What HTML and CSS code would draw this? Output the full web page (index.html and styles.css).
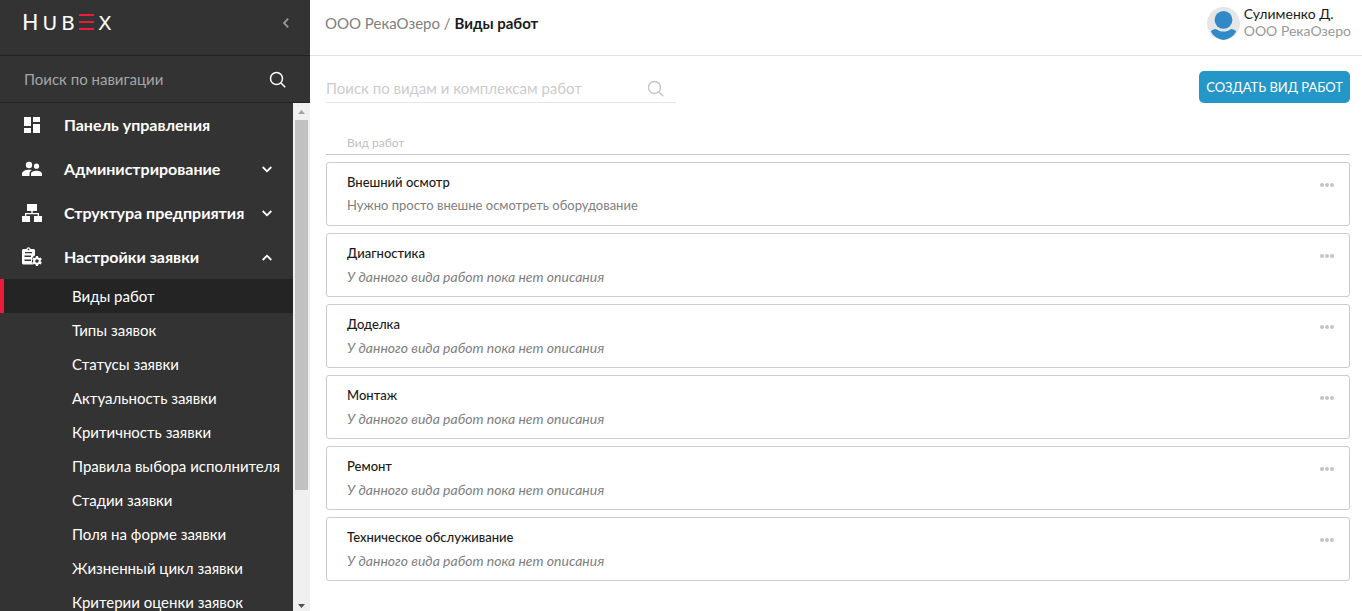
FILE: index.html
```html
<!DOCTYPE html>
<html lang="ru">
<head>
<meta charset="utf-8">
<meta name="viewport" content="width=device-width, initial-scale=1">
<title>Виды работ</title>
<link rel="stylesheet" href="styles.css">
</head>
<body>
<div class="app">
  <aside class="sidebar">
    <div class="sidebar-top">
      <a class="logo" href="#" aria-label="HubEx">
        <span class="logo-cap">H</span><span>U</span><span>B</span>
        <svg class="logo-bars" width="15" height="16" viewBox="0 0 15 16" aria-hidden="true"><path d="M0 0h15v2H0zM0 7h15v2H0zM0 14h15v2H0z" fill="#ed1a3d"/></svg>
        <span>X</span>
      </a>
      <button class="icon-button" type="button" aria-label="Свернуть меню">
        <svg width="6" height="10" viewBox="0 0 6 10" fill="none" stroke="#999" stroke-width="1.8"><path d="M5.2.7 1 5l4.2 4.3"/></svg>
      </button>
    </div>
    <form class="nav-search">
      <input type="text" aria-label="Поиск по навигации" placeholder="Поиск по навигации">
      <button class="icon-button" type="button" aria-label="Найти раздел">
        <svg width="17" height="17" viewBox="0 0 17 17" fill="none" stroke="#fff" stroke-width="1.5"><circle cx="7.500" cy="7.500" r="6"/><path d="m12 12 4.200 4.200"/></svg>
      </button>
    </form>
    <div class="nav-area">
      <nav class="nav">
        <a class="nav-item" href="#">
          <svg class="nav-icon" width="20" height="20" viewBox="0 0 20 20" fill="#fff"><path d="M2 2h7v9H2zM11 2h7v5h-7zM2 13h7v5H2zM11 9h7v9h-7z"/></svg>
          <span>Панель управления</span>
        </a>
        <a class="nav-item" href="#">
          <svg class="nav-icon" width="20" height="20" viewBox="0 0 20 20" fill="#fff"><circle cx="7" cy="6" r="3.2"/><circle cx="14.5" cy="7.2" r="2.6"/><path d="M0 17v-2.300C0 12.200 3.300 10.700 7 10.700c1 0 2 .1 2.900.3-1.500 1-2.400 2.300-2.400 3.700V17zM9 17v-2c0-2.300 2.700-3.300 5.500-3.300S20 12.700 20 15v2z"/></svg>
          <span>Администрирование</span>
          <svg class="chevron" width="10" height="7" viewBox="0 0 10 7"><path d="m.7 1 4.300 4.300L9.300 1"/></svg>
        </a>
        <a class="nav-item" href="#">
          <svg class="nav-icon" width="20" height="20" viewBox="0 0 20 20" fill="#fff"><path d="M5 1h10v7h-4.300v2H17v3h3v6h-8v-6h3.700v-1.700H4.300V13H8v6H0v-6h3v-3h6.300V8H5z"/></svg>
          <span>Структура предприятия</span>
          <svg class="chevron" width="10" height="7" viewBox="0 0 10 7"><path d="m.7 1 4.300 4.300L9.300 1"/></svg>
        </a>
        <a class="nav-item" href="#">
          <svg class="nav-icon" width="20" height="20" viewBox="0 0 20 20" fill="#fff"><path fill-rule="evenodd" d="M1.500 2H4.300a2.300 2.300 0 0 1 4.400 0h2.800c.8 0 1.500.7 1.500 1.500V8.500c-1.500.6-2.600 1.700-3 3.500v3l1 2.500H1.500C.7 17.500 0 16.800 0 16V3.500C0 2.700.7 2 1.500 2zM6.500 1.600a.8.8 0 1 0 0 1.600.8.800 0 0 0 0-1.600zM3 4.900v1.300h7V4.900zM2.500 8.500v1.400H9V8.500zM2.500 12.500v1.400H9v-1.400z"/><path d="M15 9v10M10.700 11.500l8.600 5M10.700 16.500l8.600-5" fill="none" stroke="#fff" stroke-width="2.200"/><circle cx="15" cy="14" r="2.800" fill="#333" stroke="#fff" stroke-width="2"/></svg>
          <span>Настройки заявки</span>
          <svg class="chevron" width="10" height="7" viewBox="0 0 10 7"><path d="m.7 6 4.300-4.300L9.300 6"/></svg>
        </a>
        <ul class="subnav">
          <li><a class="active" href="#" aria-current="page">Виды работ</a></li>
          <li><a href="#">Типы заявок</a></li>
          <li><a href="#">Статусы заявки</a></li>
          <li><a href="#">Актуальность заявки</a></li>
          <li><a href="#">Критичность заявки</a></li>
          <li><a href="#">Правила выбора исполнителя</a></li>
          <li><a href="#">Стадии заявки</a></li>
          <li><a href="#">Поля на форме заявки</a></li>
          <li><a href="#">Жизненный цикл заявки</a></li>
          <li><a href="#">Критерии оценки заявок</a></li>
        </ul>
      </nav>
      <div class="scrollbar" aria-hidden="true">
        <div class="scroll-arrow"><svg width="7" height="4" viewBox="0 0 7 4"><path d="M0 4 3.500 0 7 4z" fill="#a3a3a3"/></svg></div>
        <div class="scroll-track"><div class="scroll-thumb"></div></div>
        <div class="scroll-arrow scroll-down"><svg width="7" height="4" viewBox="0 0 7 4"><path d="M0 0h7L3.500 4z" fill="#505050"/></svg></div>
      </div>
    </div>
  </aside>

  <div class="page">
    <header class="header">
      <h1 class="breadcrumbs"><a href="#">ООО РекаОзеро</a> <span>/</span> <b>Виды работ</b></h1>
      <a class="user" href="#">
        <svg class="avatar" width="33" height="33" viewBox="0 0 33 33" aria-hidden="true"><circle cx="16.500" cy="16.500" r="16.500" fill="#e6e6e6"/><circle cx="16.500" cy="12.900" r="8.900" fill="#3289c8"/><path d="M3.800 24.600c1.200-1.700 3-2.700 5-2.700 4.700 3.400 10.700 3.400 15.400 0 2 0 3.800 1 5 2.700A16.500 16.500 0 0 1 16.500 33 16.500 16.500 0 0 1 3.800 24.600z" fill="#3289c8"/></svg>
        <span class="user-text"><span class="user-name">Сулименко Д.</span><span class="user-company">ООО РекаОзеро</span></span>
      </a>
    </header>
    <main class="content">
      <div class="toolbar">
        <form class="search">
          <input type="text" aria-label="Поиск по видам и комплексам работ" placeholder="Поиск по видам и комплексам работ">
          <button class="icon-button" type="button" aria-label="Найти">
            <svg width="17" height="17" viewBox="0 0 17 17" fill="none" stroke="#c4c4c4" stroke-width="1.400"><circle cx="7.500" cy="7.500" r="6"/><path d="m12 12 4.200 4.200"/></svg>
          </button>
        </form>
        <button class="create" type="button">СОЗДАТЬ ВИД РАБОТ</button>
      </div>
      <div class="list-head">Вид работ</div>
      <ul class="list">
        <li class="card"><div><h2>Внешний осмотр</h2><p>Нужно просто внешне осмотреть оборудование</p></div><button class="more" type="button" aria-label="Действия"><i></i><i></i><i></i></button></li>
        <li class="card"><div><h2>Диагностика</h2><p class="empty">У данного вида работ пока нет описания</p></div><button class="more" type="button" aria-label="Действия"><i></i><i></i><i></i></button></li>
        <li class="card"><div><h2>Доделка</h2><p class="empty">У данного вида работ пока нет описания</p></div><button class="more" type="button" aria-label="Действия"><i></i><i></i><i></i></button></li>
        <li class="card"><div><h2>Монтаж</h2><p class="empty">У данного вида работ пока нет описания</p></div><button class="more" type="button" aria-label="Действия"><i></i><i></i><i></i></button></li>
        <li class="card"><div><h2>Ремонт</h2><p class="empty">У данного вида работ пока нет описания</p></div><button class="more" type="button" aria-label="Действия"><i></i><i></i><i></i></button></li>
        <li class="card"><div><h2>Техническое обслуживание</h2><p class="empty">У данного вида работ пока нет описания</p></div><button class="more" type="button" aria-label="Действия"><i></i><i></i><i></i></button></li>
      </ul>
    </main>
  </div>
</div>
</body>
</html>
```
FILE: styles.css
```css
* { box-sizing: border-box; }
body { margin: 0; font-family: Lato, "Open Sans", sans-serif; font-size: 15px; line-height: 20px; color: #1a1a1a; background: #fff; }
a { color: inherit; text-decoration: none; }
ul { list-style: none; margin: 0; padding: 0; }
h1, h2, p { margin: 0; font-size: inherit; font-weight: 400; }
svg { display: block; flex: none; }
button, input { font: inherit; border: 0; background: none; padding: 0; margin: 0; }
input { flex: 1; min-width: 0; outline: 0; }
.icon-button { display: flex; cursor: pointer; }

.app { display: flex; height: 100vh; }
.sidebar { width: 310px; flex: none; display: flex; flex-direction: column; background: #333; color: #fff; }
.sidebar-top { display: flex; align-items: center; justify-content: space-between; height: 56px; padding: 0 21px 9px 22px; border-bottom: 1px solid #222; }
.logo { display: flex; align-items: baseline; gap: 4px; font-family: "DejaVu Sans", sans-serif; font-size: 20px; line-height: 20px; }
.logo-cap { font-size: 22px; }
.nav-search { display: flex; align-items: center; height: 47px; padding: 0 24px; border-bottom: 1px solid #222; }
.nav-search input { color: #fff; }
.nav-search input::placeholder { color: #a6a6a6; opacity: 1; }
.nav-area { display: flex; flex: 1; min-height: 0; }
.nav { flex: 1; min-width: 0; overflow: hidden; }
.nav-item { display: flex; align-items: center; height: 44px; padding: 0 21px 0 22px; font-size: 16px; font-weight: 700; }
.nav-icon { margin-right: 22px; }
.chevron { margin-left: auto; fill: none; stroke: #fff; stroke-width: 1.8; }
.subnav a { display: block; padding: 7px 0 7px 68px; border-left: 4px solid transparent; white-space: nowrap; }
.subnav .active { background: #242424; border-left-color: #ed1a3d; }
.scrollbar { display: flex; flex-direction: column; width: 17px; background: #f0f0f0; }
.scroll-arrow { display: flex; align-items: center; justify-content: center; height: 17px; }
.scroll-down { padding-top: 7px; }
.scroll-track { flex: 1; padding: 0 2px; }
.scroll-thumb { height: 78%; background: #c1c1c1; }

.page { flex: 1; min-width: 0; }
.header { display: flex; align-items: flex-start; justify-content: space-between; height: 56px; padding: 5px 11px 0 15px; border-bottom: 1px solid #e3e3e3; }
.breadcrumbs { padding-top: 8px; color: #808080; }
.breadcrumbs b { color: #1a1a1a; }
.user { display: flex; gap: 4px; font-size: 14px; line-height: 17px; }
.avatar { margin-top: 2px; }
.user-text { display: flex; flex-direction: column; }
.user-company { color: #999; }
.content { padding: 15px 12px 0 16px; }
.toolbar { display: flex; justify-content: space-between; }
.search { display: flex; align-items: center; width: 350px; height: 32px; padding: 3px 12px 0 0; border-bottom: 1px solid #e6e6e6; }
.search input::placeholder { color: #ccc; opacity: 1; }
.create { height: 32px; padding: 0 7px; border-radius: 5px; background: #2496c8; color: #fff; font-size: 13px; cursor: pointer; }
.list-head { margin-top: 30px; padding: 0 21px 1px; border-bottom: 1px solid #ccc; font-size: 12px; color: #bfbfbf; }
.list { display: flex; flex-direction: column; gap: 7px; margin-top: 7px; }
.card { display: flex; justify-content: space-between; padding: 8px 15px 8px 20px; border: 1px solid #ccc; border-radius: 3px; font-size: 13px; line-height: 23px; }
.card h2 { font-weight: 500; }
.card p { color: #808080; }
.card .empty { font-size: 14px; font-style: italic; }
.more { display: flex; align-items: center; gap: 1px; height: 28px; cursor: pointer; }
.more i { width: 4px; height: 4px; border-radius: 50%; background: #c4c4c4; }
```
